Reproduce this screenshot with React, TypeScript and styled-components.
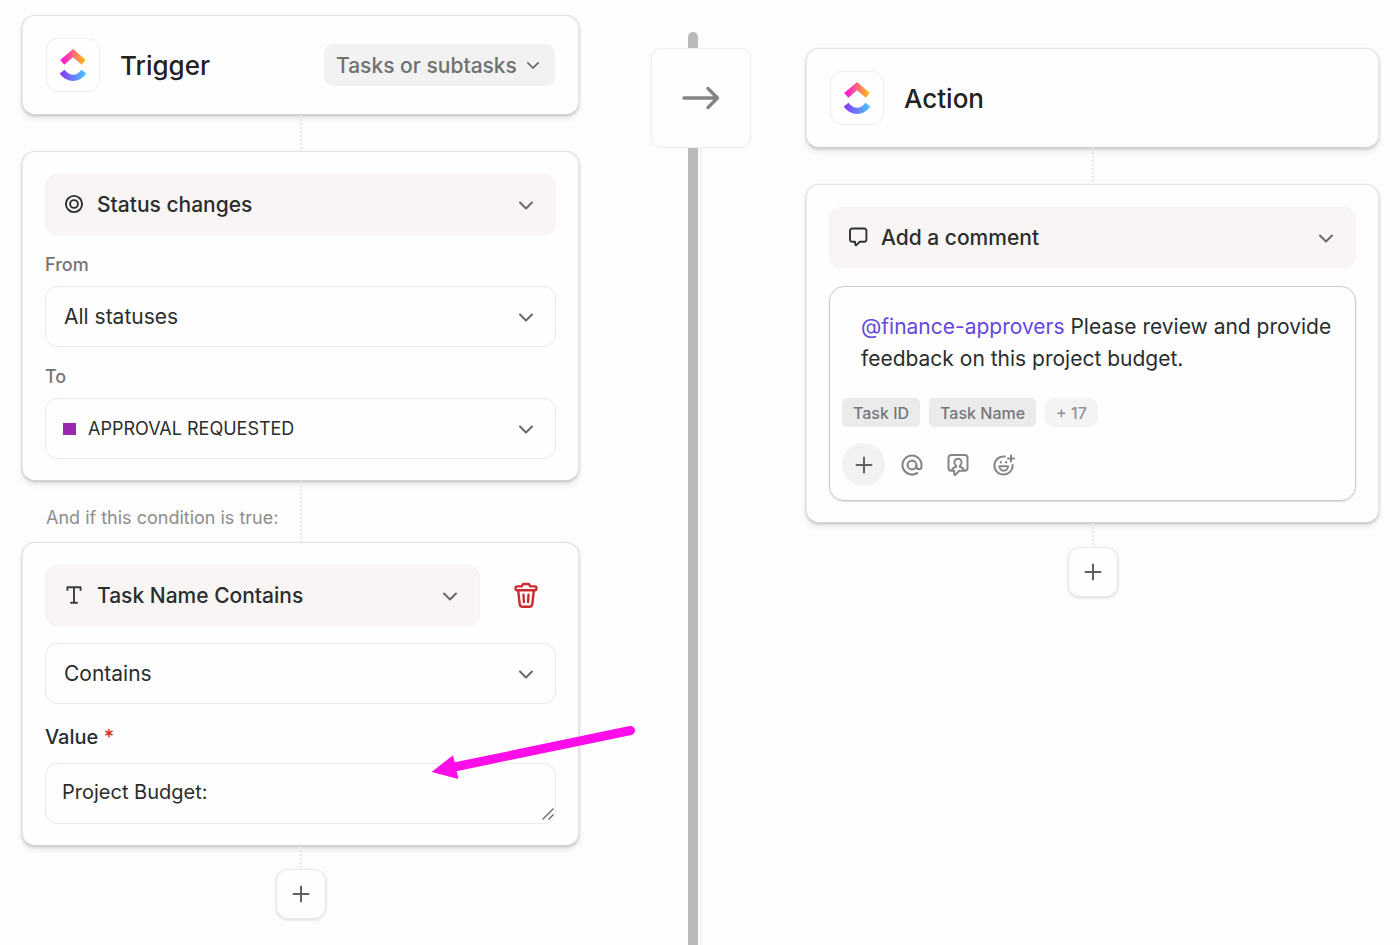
import React, { useId } from "react";
import styled, { createGlobalStyle } from "styled-components";

const GlobalStyle = createGlobalStyle`
  *, *::before, *::after { box-sizing: border-box; }
  body {
    margin: 0;
    background: #fdfdfd;
    color: #2a2d2d;
    font-family: Inter, "Liberation Sans", sans-serif;
  }
  button, select, textarea { font-family: inherit; color: inherit; margin: 0; }
`;

const Page = styled.main`
  display: grid;
  grid-template-columns: minmax(0, 557fr) 227px minmax(0, 573fr);
  min-height: 100vh;
  padding: 0 21px 0 22px;
`;

const Column = styled.section<{ $top: number }>`
  display: flex;
  flex-direction: column;
  padding-top: ${(p) => p.$top}px;
  padding-bottom: 24px;
`;

const Card = styled.div`
  background: #fefefe;
  border: 1px solid #e4e4e4;
  border-bottom-color: #d2d2d2;
  border-radius: 13px;
  box-shadow: 0 1px 3px rgba(0, 0, 0, 0.18), 0 4px 6px rgba(0, 0, 0, 0.08);
`;

const HeaderCard = styled(Card)`
  display: flex;
  align-items: center;
  gap: 20px;
  height: 100px;
  padding: 0 23px;
`;

const BodyCard = styled(Card)`
  display: flex;
  flex-direction: column;
  padding: 22px 22px 21px;
`;

const LogoTile = styled.div`
  display: grid;
  place-items: center;
  width: 54px;
  height: 54px;
  border: 1px solid #ededed;
  border-radius: 12px;
`;

const Title = styled.h2`
  flex: 1;
  margin: 0;
  padding-top: 2px;
  font-size: 26px;
  font-weight: 500;
  line-height: 32px;
  color: #222;
`;

const Connector = styled.div<{ $height: number }>`
  justify-self: center;
  align-self: center;
  width: 2px;
  height: ${(p) => p.$height}px;
  background: repeating-linear-gradient(#e6e6e6 0 2px, transparent 2px 4px);
`;

const ConditionRow = styled.div`
  display: grid;
  align-items: center;
  > * { grid-area: 1 / 1; }
`;

const ConditionText = styled.p`
  margin: 0;
  padding: 12px 24px 0;
  font-size: 18px;
  line-height: 24px;
  color: #8d8d8d;
`;

const SelectBox = styled.div`
  display: grid;
  align-items: center;
  flex: 1;
  > * { grid-area: 1 / 1; }
  > svg, > span { pointer-events: none; }
`;

const Lead = styled.span`
  display: grid;
  place-items: center;
  width: 24px;
  margin-left: 17px;
  padding-bottom: 2px;
`;

const Swatch = styled.span`
  width: 13px;
  height: 12px;
  margin-left: 18px;
  background: #9b27af;
`;

const ChevronSlot = styled.span<{ $inset: number }>`
  display: flex;
  justify-self: end;
  margin-right: ${(p) => p.$inset}px;
`;

const Select = styled.select<{ $filled?: boolean; $indent: number; $size?: number }>`
  appearance: none;
  width: 100%;
  height: 61px;
  padding: 0 48px 0 ${(p) => p.$indent}px;
  border: 1px solid ${(p) => (p.$filled ? "#f7f2f1" : "#eaeaea")};
  border-radius: 12px;
  background: ${(p) => (p.$filled ? "#f9f5f4" : "#fefefe")};
  font-size: ${(p) => p.$size ?? 21}px;
  font-weight: ${(p) => (p.$filled ? 500 : 400)};
`;

const ScopeBox = styled(SelectBox)`
  flex: none;
`;

const ScopeSelect = styled.select`
  appearance: none;
  height: 42px;
  padding: 0 38px 0 12px;
  border: 0;
  border-radius: 9px;
  background: #f2f2f2;
  font-size: 21px;
  font-weight: 500;
  && { color: #707070; }
`;

const FieldLabel = styled.label`
  padding: 18px 0 9px;
  font-size: 18px;
  font-weight: 500;
  line-height: 24px;
  color: #757575;
`;

const ValueLabel = styled.label`
  padding: 21px 0 14px;
  font-size: 20px;
  font-weight: 500;
  line-height: 24px;
`;

const Required = styled.span`
  color: #d3292f;
`;

const FilterRow = styled.div`
  display: flex;
  gap: 16px;
  margin-bottom: 17px;
`;

const DeleteButton = styled.button`
  display: grid;
  place-items: center;
  width: 60px;
  padding: 0;
  border: 0;
  background: none;
`;

const ValueField = styled.div`
  position: relative;
  display: flex;
`;

const ValueInput = styled.textarea`
  width: 100%;
  height: 61px;
  padding: 16px;
  border: 1px solid #eaeaea;
  border-radius: 12px;
  background: #fefefe;
  font-size: 20px;
  line-height: 24px;
  overflow: hidden;
  resize: none;
`;

const Grip = styled.svg`
  position: absolute;
  right: 1px;
  bottom: 3px;
  pointer-events: none;
`;

const PointerArrow = styled.svg`
  position: absolute;
  right: -80px;
  top: -40px;
  pointer-events: none;
`;

const AddButton = styled.button`
  align-self: center;
  display: grid;
  place-items: center;
  width: 50px;
  height: 50px;
  padding: 0;
  border: 1px solid #ebe9e9;
  border-radius: 12px;
  background: #fefefe;
  box-shadow: 0 1px 3px rgba(0, 0, 0, 0.14);
`;

const Divider = styled.div`
  display: grid;
  > * { grid-area: 1 / 1; }
`;

const Bar = styled.div`
  justify-self: center;
  width: 10px;
  margin-top: 32px;
  border-radius: 5px 5px 0 0;
  background: #bababa;
`;

const Rail = styled.div`
  display: flex;
  flex-direction: column;
  align-items: center;
  padding: 48px 0 0 17px;
`;

const ArrowTile = styled.div`
  display: grid;
  place-items: center;
  width: 100px;
  height: 100px;
  border: 1px solid #ececec;
  border-radius: 10px;
  background: #fefefe;
`;

const RailLine = styled.div`
  flex: 1;
  width: 2px;
  background: #f1f1f1;
`;

const Composer = styled.div`
  margin-top: 18px;
  padding: 24px 12px 14px;
  border: 1px solid #c9c9c9;
  border-radius: 15px;
  box-shadow: 0 1px 2px rgba(0, 0, 0, 0.14);
`;

const CommentText = styled.div`
  padding-left: 19px;
  font-size: 21px;
  line-height: 32px;
  outline: none;
`;

const Mention = styled.a`
  color: #6647e0;
  text-decoration: none;
`;

const ChipRow = styled.div`
  display: flex;
  gap: 9px;
  margin-top: 23px;
`;

const Chip = styled.button<{ $soft?: boolean }>`
  height: 29px;
  padding: 0 11px;
  border: 0;
  border-radius: ${(p) => (p.$soft ? 9 : 5)}px;
  background: ${(p) => (p.$soft ? "#f4f4f4" : "#ebebeb")};
  font-size: 16px;
  font-weight: 500;
  && { color: ${(p) => (p.$soft ? "#8f9298" : "#73777e")}; }
`;

const Tools = styled.div`
  display: flex;
  gap: 7px;
  margin-top: 16px;
`;

const ToolButton = styled.button<{ $round?: boolean }>`
  display: grid;
  place-items: center;
  width: ${(p) => (p.$round ? 43 : 39)}px;
  height: 43px;
  padding: 0;
  border: 0;
  border-radius: 50%;
  background: ${(p) => (p.$round ? "#f2f2f2" : "none")};
  && { color: ${(p) => (p.$round ? "#626262" : "#868686")}; }
`;

function ClickUpLogo() {
  const id = useId();
  return (
    <svg width="32" height="32" viewBox="0 0 24 24" aria-hidden="true">
      <defs>
        <linearGradient id={id + "top"} x1="2" y1="0" x2="22" y2="0" gradientUnits="userSpaceOnUse">
          <stop offset="0" stopColor="#ff02f0" />
          <stop offset="0.5" stopColor="#ff6680" />
          <stop offset="1" stopColor="#ffc800" />
        </linearGradient>
        <linearGradient id={id + "low"} x1="2" y1="0" x2="22" y2="0" gradientUnits="userSpaceOnUse">
          <stop offset="0" stopColor="#8930fd" />
          <stop offset="1" stopColor="#49ccf9" />
        </linearGradient>
      </defs>
      <path fill={`url(#${id}low)`} d="M2 18.439l3.69-2.828c1.961 2.56 4.044 3.739 6.363 3.739 2.307 0 4.33-1.166 6.203-3.704L22 18.405C19.298 22.065 15.941 24 12.053 24 8.178 24 4.788 22.078 2 18.439z" />
      <path fill={`url(#${id}top)`} d="M12.04 6.15l-6.568 5.66-3.036-3.52L12.055 0l9.543 8.296-3.05 3.509z" />
    </svg>
  );
}

function Chevron({ width = 14 }: { width?: number }) {
  return (
    <svg width={width} height={width} viewBox="0 0 14 14" fill="none" stroke="#686868" strokeWidth="2" strokeLinecap="round" strokeLinejoin="round" aria-hidden="true">
      <path d="M1 4.5l6 6 6-6" />
    </svg>
  );
}

function PlusIcon() {
  return (
    <svg width="18" height="18" viewBox="0 0 18 18" fill="none" stroke="#626262" strokeWidth="2" strokeLinecap="round" aria-hidden="true">
      <path d="M9 1.5v15M1.5 9h15" />
    </svg>
  );
}

function TargetIcon() {
  return (
    <svg width="20" height="20" viewBox="0 0 20 20" fill="none" stroke="#2e3030" strokeWidth="1.9" aria-hidden="true">
      <circle cx="10" cy="10" r="8.1" />
      <circle cx="10" cy="10" r="3.9" />
    </svg>
  );
}

function TextIcon() {
  return (
    <svg width="18" height="20" viewBox="0 0 18 20" fill="none" stroke="#3a3d3d" strokeWidth="1.9" strokeLinecap="round" strokeLinejoin="round" aria-hidden="true">
      <path d="M2.4 5V2.2h13.2V5M9 2.2v15.6M6 17.8h6" />
    </svg>
  );
}

function CommentIcon() {
  return (
    <svg width="20" height="20" viewBox="0 0 20 20" fill="none" stroke="#2e3030" strokeWidth="1.9" strokeLinejoin="round" aria-hidden="true">
      <path d="M4.200 1.500h12a2.200 2.200 0 0 1 2.200 2.200v8.800a2.200 2.200 0 0 1-2.200 2.200h-4.400l-3.200 3.200q-1 .9-1.200-.4l-.4-2.800H4.200A2.200 2.200 0 0 1 2 12.500V3.700a2.200 2.200 0 0 1 2.200-2.200z" />
    </svg>
  );
}

function TrashIcon() {
  return (
    <svg width="24" height="27" viewBox="0 0 24 27" fill="none" stroke="#cb2a30" strokeWidth="2.4" strokeLinecap="round" strokeLinejoin="round" aria-hidden="true">
      <path d="M4.200 8.600l1.500 13.500a2.900 2.900 0 0 0 2.900 2.600h6.800a2.900 2.900 0 0 0 2.900-2.600l1.500-13.500" />
      <path d="M3 4.400h4.600l1-1.600q.5-.8 1.300-.8h4.200q.8 0 1.300.8l1 1.600H21q1.500 0 1.500 1.900 0 1.900-1.500 1.900H3q-1.500 0-1.500-1.900 0-1.900 1.500-1.900z" />
      <path d="M9.500 12.800l.4 7.200M14.500 12.800l-.4 7.200" />
    </svg>
  );
}

function AtIcon() {
  return (
    <svg width="22" height="22" viewBox="0 0 22 22" fill="none" stroke="currentColor" strokeWidth="2.100" strokeLinecap="round" aria-hidden="true">
      <circle cx="11" cy="11" r="4.400" />
      <path d="M15.400 11v1.600a2.550 2.550 0 0 0 5.100 0V11a9.500 9.500 0 1 0-4.300 8" />
    </svg>
  );
}

function AssignIcon() {
  return (
    <svg width="22" height="24" viewBox="0 0 22 24" fill="none" stroke="currentColor" strokeWidth="2" strokeLinecap="round" strokeLinejoin="round" aria-hidden="true">
      <path d="M6.200 17.800H4.300a2.800 2.800 0 0 1-2.800-2.800V4.800A2.800 2.800 0 0 1 4.300 2h13.400a2.800 2.800 0 0 1 2.800 2.800V15a2.800 2.800 0 0 1-2.800 2.800h-5.500l-3.600 3.800q-1.400 1-1.400-.8v-3" />
      <path d="M5.200 17c.4-1.800 1.600-2.500 3.600-2.900.6-.2.600-.8.200-1.300C8 11.800 7.400 10.700 7.400 9.300a3.600 3.600 0 0 1 7.200 0c0 1.400-.6 2.500-1.600 3.500-.4.500-.4 1.100.2 1.300 2 .4 3.200 1.100 3.600 2.900" />
    </svg>
  );
}

function SmileIcon() {
  return (
    <svg width="22" height="22" viewBox="0 0 22 22" fill="none" stroke="currentColor" strokeWidth="2" strokeLinecap="round" strokeLinejoin="round" aria-hidden="true">
      <path d="M11.800 2.500a9.100 9.100 0 1 0 7.800 8.600" />
      <path d="M6.300 12.300h8.800a4.400 4.400 0 0 1-8.800 0z" />
      <path d="M7.800 8.100v.3M13.200 8.100v.3" strokeWidth="2.200" />
      <path d="M18 1.400v6.200M14.900 4.500h6.200" />
    </svg>
  );
}

type FieldProps = {
  id?: string;
  label?: string;
  value: string;
  icon?: React.ReactNode;
  filled?: boolean;
  indent: number;
  size?: number;
};

function SelectField({ id, label, value, icon, filled, indent, size }: FieldProps) {
  return (
    <SelectBox>
      <Select id={id} aria-label={label} $filled={filled} $indent={indent} $size={size} defaultValue={value}>
        <option>{value}</option>
      </Select>
      {icon}
      <ChevronSlot $inset={23}><Chevron /></ChevronSlot>
    </SelectBox>
  );
}

export default function App() {
  return (
    <>
      <GlobalStyle />
      <Page>
        <Column $top={15}>
          <HeaderCard>
            <LogoTile><ClickUpLogo /></LogoTile>
            <Title>Trigger</Title>
            <ScopeBox>
              <ScopeSelect aria-label="Applies to">
                <option>Tasks or subtasks</option>
              </ScopeSelect>
              <ChevronSlot $inset={16}><Chevron width={12} /></ChevronSlot>
            </ScopeBox>
          </HeaderCard>
          <Connector $height={36} />
          <BodyCard>
            <SelectField label="Trigger type" value="Status changes" filled indent={51} icon={<Lead><TargetIcon /></Lead>} />
            <FieldLabel htmlFor="from">From</FieldLabel>
            <SelectField id="from" value="All statuses" indent={18} />
            <FieldLabel htmlFor="to">To</FieldLabel>
            <SelectField id="to" value="APPROVAL REQUESTED" indent={42} size={18} icon={<Swatch />} />
          </BodyCard>
          <ConditionRow>
            <ConditionText>And if this condition is true:</ConditionText>
            <Connector $height={61} />
          </ConditionRow>
          <BodyCard>
            <FilterRow>
              <SelectField label="Condition" value="Task Name Contains" filled indent={51} icon={<Lead><TextIcon /></Lead>} />
              <DeleteButton type="button" aria-label="Delete condition"><TrashIcon /></DeleteButton>
            </FilterRow>
            <SelectField label="Operator" value="Contains" indent={18} />
            <ValueLabel htmlFor="value">Value <Required>*</Required></ValueLabel>
            <ValueField>
              <ValueInput id="value" defaultValue="Project Budget:" />
              <Grip width="14" height="14" viewBox="0 0 14 14" stroke="#6a6a6a" strokeWidth="1.400" aria-hidden="true">
                <path d="M1.500 12.500l11-11M7.500 12.500l5-5" />
              </Grip>
              <PointerArrow width="208" height="56" viewBox="0 0 208 56" aria-hidden="true">
                <path d="M24 44.500L202.500 7.500" stroke="#ff0de9" strokeWidth="9" strokeLinecap="round" />
                <path d="M3.500 49L25 32.200L30.500 56z" fill="#ff0de9" />
              </PointerArrow>
            </ValueField>
          </BodyCard>
          <Connector $height={23} />
          <AddButton type="button" aria-label="Add condition"><PlusIcon /></AddButton>
        </Column>

        <Divider>
          <Bar />
          <Rail>
            <ArrowTile>
              <svg width="38" height="24" viewBox="0 0 38 24" fill="none" stroke="#858585" strokeWidth="3.400" strokeLinecap="round" strokeLinejoin="round" aria-hidden="true">
                <path d="M2 12h33M26 2.500L35.500 12L26 21.500" />
              </svg>
            </ArrowTile>
            <RailLine />
          </Rail>
        </Divider>

        <Column $top={48}>
          <HeaderCard>
            <LogoTile><ClickUpLogo /></LogoTile>
            <Title>Action</Title>
          </HeaderCard>
          <Connector $height={36} />
          <BodyCard>
            <SelectField label="Action type" value="Add a comment" filled indent={51} icon={<Lead><CommentIcon /></Lead>} />
            <Composer>
              <CommentText role="textbox" aria-label="Comment" contentEditable suppressContentEditableWarning spellCheck={false}>
                <Mention href="#finance-approvers">@finance-approvers</Mention> Please review and provide feedback on this project budget.
              </CommentText>
              <ChipRow>
                <Chip type="button">Task ID</Chip>
                <Chip type="button">Task Name</Chip>
                <Chip type="button" $soft>+ 17</Chip>
              </ChipRow>
              <Tools>
                <ToolButton type="button" $round aria-label="Add"><PlusIcon /></ToolButton>
                <ToolButton type="button" aria-label="Mention"><AtIcon /></ToolButton>
                <ToolButton type="button" aria-label="Assign comment"><AssignIcon /></ToolButton>
                <ToolButton type="button" aria-label="Emoji"><SmileIcon /></ToolButton>
              </Tools>
            </Composer>
          </BodyCard>
          <Connector $height={24} />
          <AddButton type="button" aria-label="Add action"><PlusIcon /></AddButton>
        </Column>
      </Page>
    </>
  );
}
